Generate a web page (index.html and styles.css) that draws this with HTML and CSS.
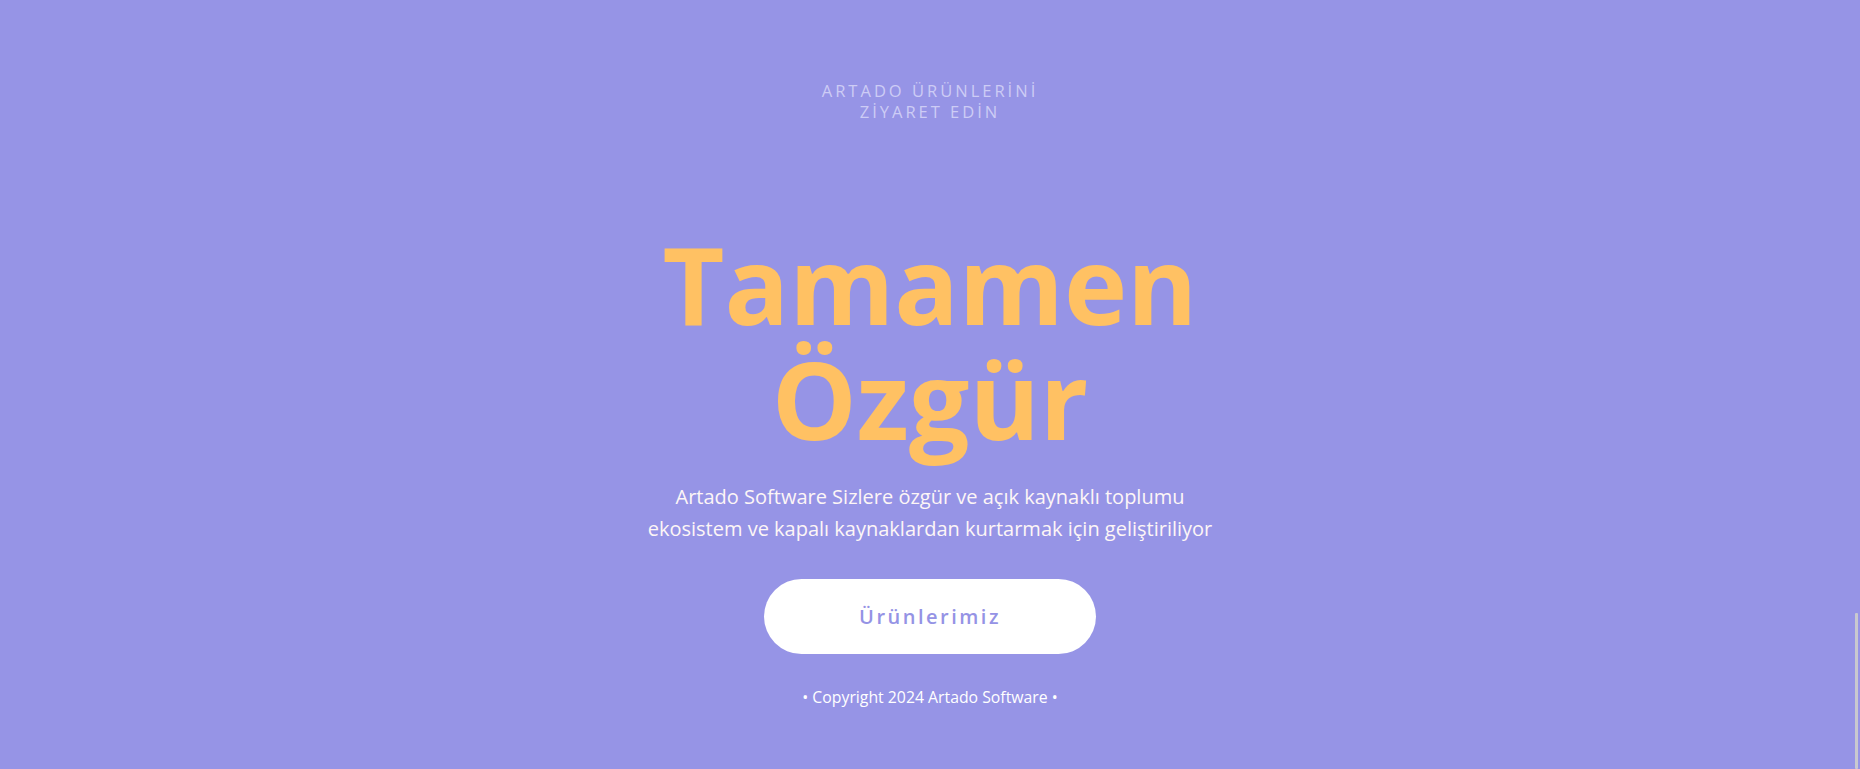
FILE: index.html
```html
<!DOCTYPE html>
<html lang="tr">
<head>
<meta charset="utf-8">
<title>Artado Software</title>
<link rel="stylesheet" href="styles.css">
</head>
<body>
<main class="hero">
  <a class="visit" href="#">Artado Ürünlerini<br>Ziyaret Edin</a>
  <h1 class="title">Tamamen<br>Özgür</h1>
  <p class="lead">Artado Software Sizlere özgür ve açık kaynaklı toplumu ekosistem ve kapalı kaynaklardan kurtarmak için geliştiriliyor</p>
  <a class="btn" href="#">Ürünlerimiz</a>
  <footer class="copy">• Copyright 2024 Artado Software •</footer>
</main>
<div class="scroll-thumb"></div>
</body>
</html>
```

FILE: styles.css
```css
html, body {
  margin: 0;
  padding: 0;
  height: 100%;
  overflow: hidden;
}
body {
  background: #9694e6;
  font-family: "Open Sans", "Liberation Sans", sans-serif;
  color: #ffffff;
}
.hero {
  display: flex;
  flex-direction: column;
  align-items: center;
  text-align: center;
  padding-top: 80px;
}
.visit {
  display: block;
  font-size: 16.5px;
  line-height: 21px;
  letter-spacing: 3px;
  text-transform: uppercase;
  color: #cdccf5;
  text-decoration: none;
}
.title {
  margin: 104px 0 0;
  font-size: 107px;
  line-height: 115px;
  font-weight: 700;
  color: #ffc163;
}
.lead {
  margin: 25px 0 0;
  max-width: 580px;
  font-size: 20px;
  line-height: 32px;
  color: #fdf6f6;
}
.btn {
  margin-top: 34px;
  width: 332px;
  height: 75px;
  display: flex;
  align-items: center;
  justify-content: center;
  background: #ffffff;
  border-radius: 38px;
  color: #9593e5;
  font-size: 20px;
  font-weight: 600;
  letter-spacing: 2.5px;
  text-decoration: none;
}
.copy {
  margin-top: 31px;
  font-size: 15.8px;
  line-height: 24px;
  color: #ffffff;
}
.scroll-thumb {
  position: fixed;
  right: 2px;
  bottom: 0;
  width: 3px;
  height: 156px;
  background: #c9c9cf;
  border-radius: 1px;
}
```
